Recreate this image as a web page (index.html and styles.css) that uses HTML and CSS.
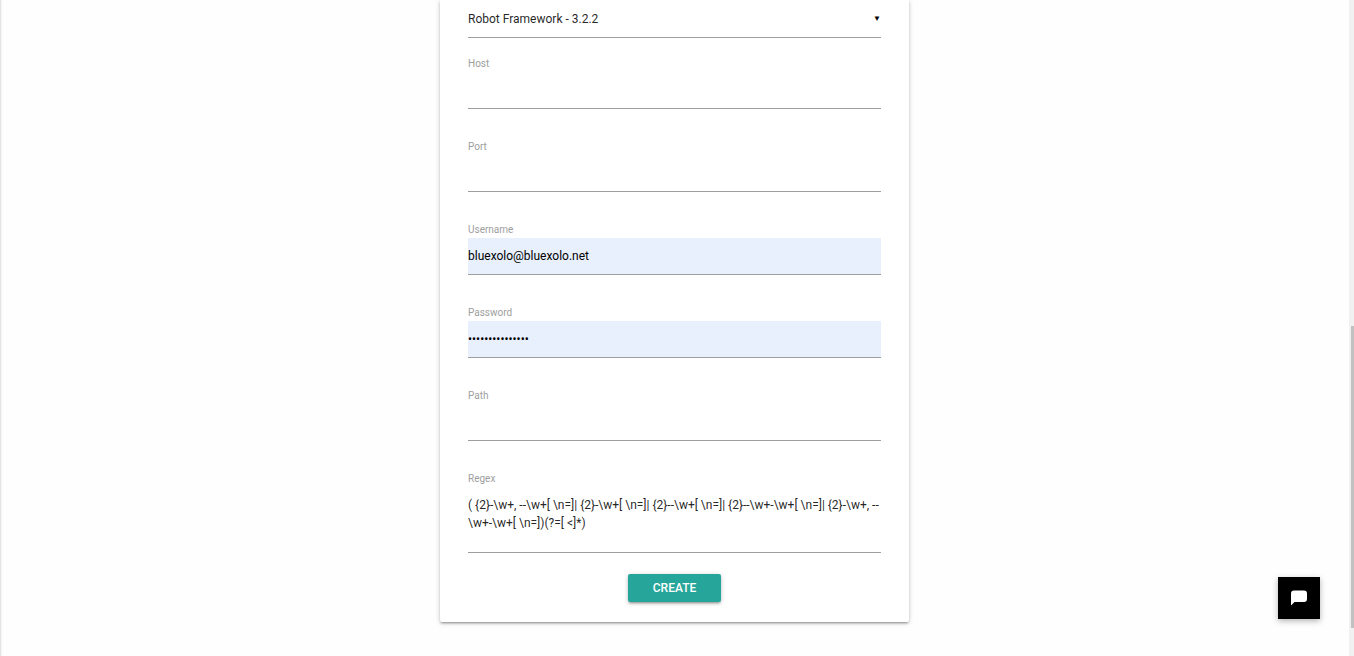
FILE: index.html
```html
<!DOCTYPE html>
<html lang="en">
<head>
<meta charset="utf-8">
<title>Create</title>
<link rel="stylesheet" href="styles.css">
</head>
<body>
<div class="page">
  <main class="content">
    <form class="card">
      <div class="select-field">
        <select class="select" aria-label="Framework">
          <option>Robot Framework - 3.2.2</option>
        </select>
        <span class="caret" aria-hidden="true">▼</span>
      </div>
      <div class="field">
        <label class="label" for="host">Host</label>
        <input class="input" id="host" type="text">
      </div>
      <div class="field">
        <label class="label" for="port">Port</label>
        <input class="input" id="port" type="text">
      </div>
      <div class="field">
        <label class="label" for="username">Username</label>
        <input class="input filled" id="username" type="text" value="bluexolo@bluexolo.net">
      </div>
      <div class="field">
        <label class="label" for="password">Password</label>
        <input class="input filled" id="password" type="password" value="123456789012345">
      </div>
      <div class="field">
        <label class="label" for="path">Path</label>
        <input class="input" id="path" type="text">
      </div>
      <div class="field">
        <label class="label" for="regex">Regex</label>
        <textarea class="input textarea" id="regex" spellcheck="false">( {2}-\w+, --\w+[ \n=]| {2}-\w+[ \n=]| {2}--\w+[ \n=]| {2}--\w+-\w+[ \n=]| {2}-\w+, --\w+-\w+[ \n=])(?=[ &lt;]*)</textarea>
      </div>
      <button class="create" type="button">CREATE</button>
    </form>
  </main>
  <div class="rail"><div class="thumb"></div></div>
</div>
<button class="chat" type="button" aria-label="Open chat">
  <svg width="16" height="16" viewBox="0 0 16 16" aria-hidden="true"><path fill="#fff" d="M3 0.5h10a3 3 0 0 1 3 3v5.500a3 3 0 0 1-3 3H3.500L0 15.500V3.500a3 3 0 0 1 3-3z"/></svg>
</button>
</body>
</html>
```
FILE: styles.css
```css
* { box-sizing: border-box; }
body {
  margin: 0;
  background: #fefefe;
  color: rgba(0, 0, 0, 0.87);
  font-family: Roboto, sans-serif;
  font-size: 12px;
}
.page { display: flex; min-height: 100vh; }
.content {
  flex: 1;
  padding: 0 16px 32px;
  box-shadow: inset 2px 0 2px -1px rgba(0, 0, 0, 0.14);
}
.card {
  display: flex;
  flex-direction: column;
  max-width: 469px;
  margin: 0 auto;
  padding: 0 28px 20px;
  background: #fff;
  border-radius: 0 0 2px 2px;
  box-shadow: 0 2px 2px 0 rgba(0, 0, 0, 0.14), 0 3px 1px -2px rgba(0, 0, 0, 0.12), 0 1px 5px 0 rgba(0, 0, 0, 0.2);
}
.select-field { position: relative; margin-bottom: 18px; }
.select {
  display: block;
  width: 100%;
  height: 38px;
  padding: 0;
  border: 0;
  border-bottom: 1px solid #9e9e9e;
  border-radius: 0;
  background: transparent;
  color: inherit;
  font: inherit;
  appearance: none;
}
.caret {
  position: absolute;
  top: 12px;
  right: 0;
  color: #000;
  font-size: 8px;
  line-height: 14px;
  pointer-events: none;
}
.field { display: flex; flex-direction: column; margin-bottom: 30px; }
.label { color: #9e9e9e; font-size: 10px; line-height: 16px; }
.input {
  width: 100%;
  height: 37px;
  padding: 0;
  border: 0;
  border-bottom: 1px solid #9e9e9e;
  border-radius: 0;
  background: transparent;
  color: inherit;
  font: inherit;
  outline: none;
}
.filled { background: #e8f0fe; color: #000; }
.textarea {
  height: 66px;
  padding: 9px 0;
  line-height: 18px;
  resize: none;
  overflow: hidden;
}
.field:last-of-type { margin-bottom: 21px; }
.create {
  align-self: center;
  height: 28px;
  padding: 0 25px;
  border: 0;
  border-radius: 2px;
  background: #26a69a;
  color: #fff;
  font: inherit;
  font-weight: 500;
  box-shadow: 0 2px 2px 0 rgba(0, 0, 0, 0.14), 0 3px 1px -2px rgba(0, 0, 0, 0.12), 0 1px 5px 0 rgba(0, 0, 0, 0.2);
}
.rail { display: flex; width: 5px; padding-left: 2px; background: #f1f1f1; }
.thumb { flex: 1; height: 46vh; margin-top: 326px; background: #c1c1c1; }
.chat {
  position: fixed;
  right: 34px;
  bottom: 37px;
  display: flex;
  align-items: center;
  justify-content: center;
  width: 42px;
  height: 42px;
  padding: 0;
  border: 0;
  background: #000;
  box-shadow: 0 2px 6px rgba(0, 0, 0, 0.3);
}
```
